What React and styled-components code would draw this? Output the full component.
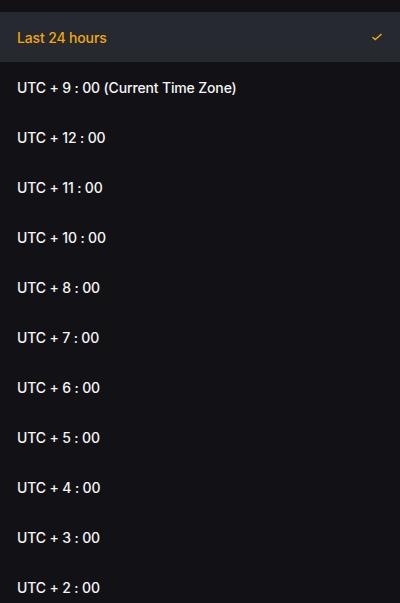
import styled, { createGlobalStyle } from "styled-components";

const Global = createGlobalStyle`
  html, body {
    margin: 0;
    padding: 0;
    background: #121216;
    font-family: Inter, "Noto Sans", sans-serif;
  }
`;

const Sheet = styled.div`
  width: 400px;
  height: 603px;
  overflow: hidden;
  background: #121216;
  padding-top: 12px;
  box-sizing: border-box;
`;

const Row = styled.div`
  height: 50px;
  display: flex;
  align-items: center;
  justify-content: space-between;
  padding: 0 17px;
  background: ${(p) => (p.$active ? "#262930" : "transparent")};
  color: ${(p) => (p.$active ? "#f2a60d" : "#f5f5f5")};
  font-size: 14px;
  font-weight: 500;
  letter-spacing: -0.15px;
`;

const Check = () => (
  <svg width="12" height="10" viewBox="0 0 12 10" fill="none">
    <path d="M1.5 5.2 L4.3 7.6 L10.5 2" stroke="#f2a60d" strokeWidth="1.5" />
  </svg>
);

const zones = [
  "UTC + 9 : 00 (Current Time Zone)",
  "UTC + 12 : 00",
  "UTC + 11 : 00",
  "UTC + 10 : 00",
  "UTC + 8 : 00",
  "UTC + 7 : 00",
  "UTC + 6 : 00",
  "UTC + 5 : 00",
  "UTC + 4 : 00",
  "UTC + 3 : 00",
  "UTC + 2 : 00",
];

export default function App() {
  return (
    <>
      <Global />
      <Sheet>
        <Row $active>
          <span>Last 24 hours</span>
          <Check />
        </Row>
        {zones.map((z) => (
          <Row key={z}>
            <span>{z}</span>
          </Row>
        ))}
      </Sheet>
    </>
  );
}
